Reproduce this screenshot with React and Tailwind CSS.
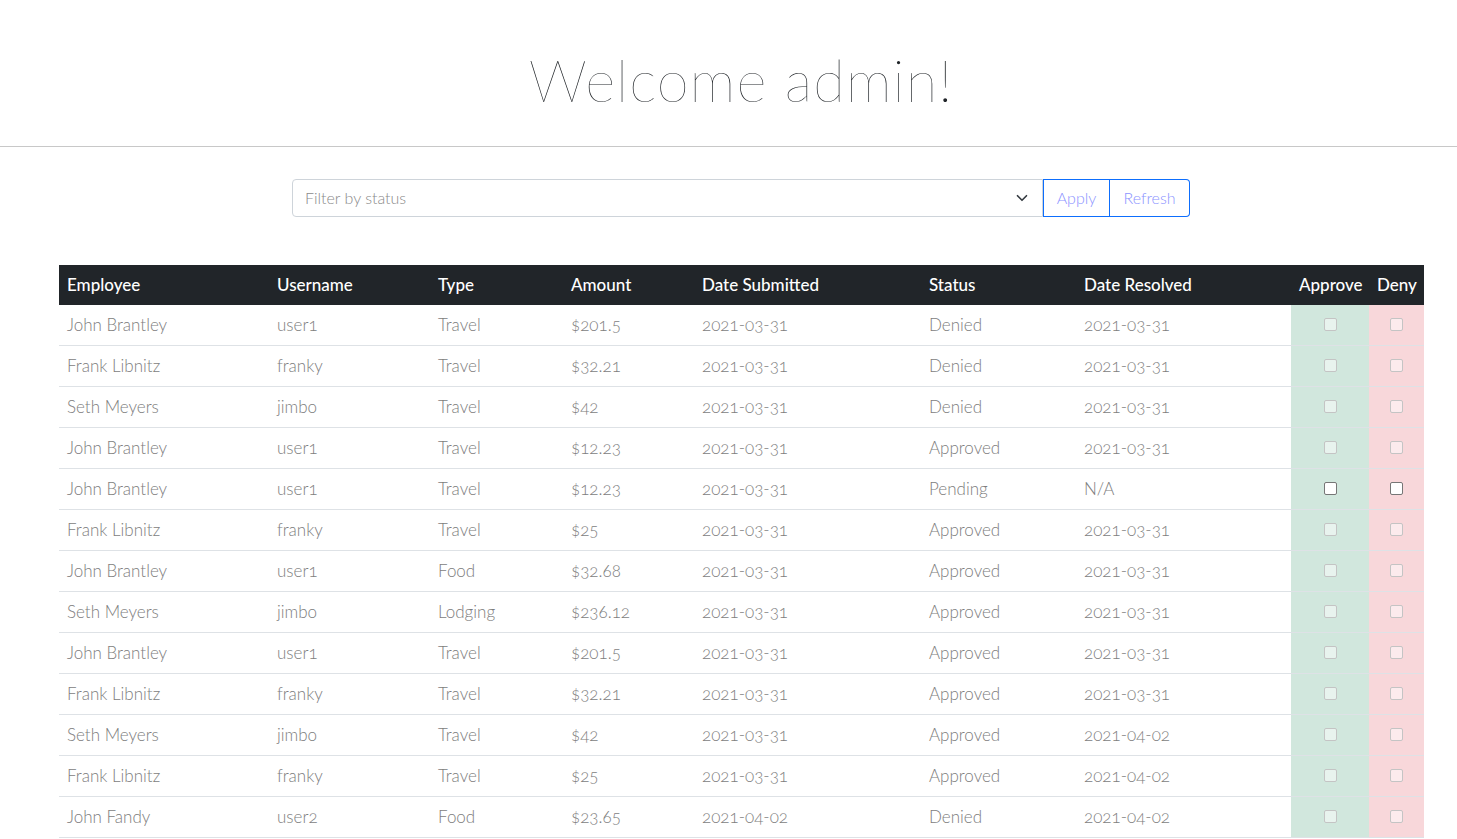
const rows = [
  ['John Brantley', 'user1', 'Travel', '$201.5', '2021-03-31', 'Denied', '2021-03-31'],
  ['Frank Libnitz', 'franky', 'Travel', '$32.21', '2021-03-31', 'Denied', '2021-03-31'],
  ['Seth Meyers', 'jimbo', 'Travel', '$42', '2021-03-31', 'Denied', '2021-03-31'],
  ['John Brantley', 'user1', 'Travel', '$12.23', '2021-03-31', 'Approved', '2021-03-31'],
  ['John Brantley', 'user1', 'Travel', '$12.23', '2021-03-31', 'Pending', 'N/A'],
  ['Frank Libnitz', 'franky', 'Travel', '$25', '2021-03-31', 'Approved', '2021-03-31'],
  ['John Brantley', 'user1', 'Food', '$32.68', '2021-03-31', 'Approved', '2021-03-31'],
  ['Seth Meyers', 'jimbo', 'Lodging', '$236.12', '2021-03-31', 'Approved', '2021-03-31'],
  ['John Brantley', 'user1', 'Travel', '$201.5', '2021-03-31', 'Approved', '2021-03-31'],
  ['Frank Libnitz', 'franky', 'Travel', '$32.21', '2021-03-31', 'Approved', '2021-03-31'],
  ['Seth Meyers', 'jimbo', 'Travel', '$42', '2021-03-31', 'Approved', '2021-04-02'],
  ['Frank Libnitz', 'franky', 'Travel', '$25', '2021-03-31', 'Approved', '2021-04-02'],
  ['John Fandy', 'user2', 'Food', '$23.65', '2021-04-02', 'Denied', '2021-04-02'],
]

const cols = ['w-[210px]', 'w-[161px]', 'w-[133px]', 'w-[131px]', 'w-[227px]', 'w-[155px]', 'w-[215px]']
const heads = ['Employee', 'Username', 'Type', 'Amount', 'Date Submitted', 'Status', 'Date Resolved']

function Box({ on }) {
  return (
    <span
      className={`inline-block w-[13px] h-[13px] rounded-[2px] border ${
        on ? 'bg-white border-[#767676]' : 'bg-white/50 border-[#c4c4c4]'
      }`}
    />
  )
}

export default function App() {
  return (
    <div className="h-[839px] w-full overflow-hidden bg-white font-['Lato',sans-serif]">
      <div className="w-[1482px]">
        <h1 className="pt-[46px] pb-[32px] text-center text-[58px] leading-[68px] font-thin tracking-[1px] text-[#212529]">
          Welcome admin!
        </h1>
        <div className="border-t border-[#c8c8c8]" />

        {/* filter */}
        <div className="flex ml-[292px] mt-[32px] h-[38px] w-[898px]">
          <div className="flex-1 flex items-center justify-between pl-3 pr-[14px] border border-[#ced4da] rounded-l-[4px] text-[16px] font-light text-[#8a8a8a]">
            <span>Filter by status</span>
            <svg width="12" height="12" viewBox="0 0 16 16">
              <path d="M2 5l6 6 6-6" fill="none" stroke="#343a40" strokeWidth="2.2" strokeLinecap="round" strokeLinejoin="round" />
            </svg>
          </div>
          <button className="w-[67px] border border-[#0d6efd] text-[16px] font-light text-[#8c94ff]">Apply</button>
          <button className="w-[80px] border border-l-0 border-[#0d6efd] rounded-r-[4px] text-[16px] font-light text-[#8c94ff]">
            Refresh
          </button>
        </div>

        {/* table */}
        <div className="ml-[59px] mt-[48px] w-[1365px]">
          <div className="flex h-[40px] items-center bg-[#212529] text-white text-[17px] font-medium">
            {heads.map((h, i) => (
              <div key={h} className={`${cols[i]} px-2`}>{h}</div>
            ))}
            <div className="w-[78px] px-2">Approve</div>
            <div className="w-[55px] px-2">Deny</div>
          </div>
          {rows.map((r, idx) => {
            const pending = r[5] === 'Pending'
            return (
              <div key={idx} className="flex h-[41px] border-b border-[#dee2e6] text-[17px] font-light text-[#7d7d7d] oldstyle-nums">
                {r.map((c, i) => (
                  <div key={i} className={`${cols[i]} px-2 flex items-center`}>{c}</div>
                ))}
                <div className="w-[78px] bg-[#d1e7dd] flex justify-center pt-[13px]">
                  <Box on={pending} />
                </div>
                <div className="w-[55px] bg-[#f8d7da] flex justify-center pt-[13px]">
                  <Box on={pending} />
                </div>
              </div>
            )
          })}
        </div>
      </div>
    </div>
  )
}
